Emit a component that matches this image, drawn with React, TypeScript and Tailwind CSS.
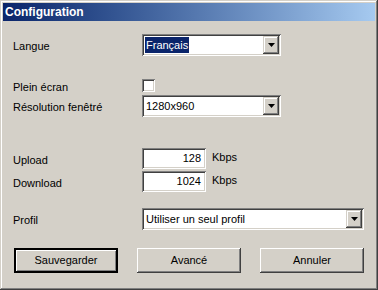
const sunken =
  'shadow-[inset_1px_1px_#808080,inset_-1px_-1px_#ffffff,inset_2px_2px_#404040,inset_-2px_-2px_#d4d0c8]';
const raised =
  'shadow-[inset_-1px_-1px_#404040,inset_1px_1px_#d4d0c8,inset_-2px_-2px_#808080,inset_2px_2px_#ffffff]';

function Arrow() {
  return (
    <div className={`flex h-full w-[16px] items-center justify-center bg-[#d4d0c8] ${raised}`}>
      <svg width="7" height="4" viewBox="0 0 7 4">
        <polygon points="0,0 7,0 3.5,4" fill="#000" />
      </svg>
    </div>
  );
}

function Combo({ value, width, focused }: { value: string; width: string; focused?: boolean }) {
  return (
    <div className={`flex h-[22px] ${width} items-stretch bg-white p-[2px] ${sunken}`}>
      <div className="flex flex-1 items-center pl-[1px]">
        <span className={focused ? 'bg-[#0a246a] px-[1px] leading-[16px] text-white' : 'pl-[1px]'}>{value}</span>
      </div>
      <Arrow />
    </div>
  );
}

function Row({ label, className, children }: { label: string; className: string; children: React.ReactNode }) {
  return (
    <div className={`flex items-center ${className}`}>
      <div className="ml-[10px] w-[129px] pt-[3px]">{label}</div>
      {children}
    </div>
  );
}

function NumField({ value }: { value: string }) {
  return (
    <div className="flex items-center gap-[6px]">
      <div className={`flex h-[21px] w-[64px] items-center justify-end bg-white pr-[5px] ${sunken}`}>{value}</div>
      <span className="-mt-[3px]">Kbps</span>
    </div>
  );
}

function Button({ label, isDefault }: { label: string; isDefault?: boolean }) {
  return (
    <button
      type="button"
      className={`flex h-[25px] w-[104px] items-center justify-center bg-[#d4d0c8] ${
        isDefault
          ? 'border border-black shadow-[inset_1px_1px_#000000,inset_-1px_-1px_#000000,inset_2px_2px_#ffffff,inset_-2px_-2px_#808080]'
          : 'shadow-[inset_-1px_-1px_#404040,inset_1px_1px_#ffffff,inset_-2px_-2px_#808080,inset_2px_2px_#d4d0c8]'
      }`}
    >
      {label}
    </button>
  );
}

export default function App() {
  return (
    <div className="h-[290px] w-[378px] bg-[#d4d0c8] p-[3px] font-['Liberation_Sans',Arial,sans-serif] text-[11px] text-black shadow-[inset_-1px_-1px_#404040,inset_1px_1px_#d4d0c8,inset_-2px_-2px_#808080,inset_2px_2px_#ffffff]">
      <div className="flex h-[18px] items-center bg-gradient-to-r from-[#0a246a] to-[#a6caf0] pl-[2px] text-[12px] font-bold text-white">
        Configuration
      </div>

      <Row label="Langue" className="mt-[13px] h-[22px]">
        <Combo value="Français" width="w-[139px]" focused />
      </Row>

      <Row label="Plein écran" className="mt-[23px] h-[13px]">
        <div className={`h-[13px] w-[13px] bg-white ${sunken}`} />
      </Row>

      <Row label="Résolution fenêtré" className="mt-[3px] h-[22px]">
        <Combo value="1280x960" width="w-[139px]" />
      </Row>

      <Row label="Upload" className="mt-[31px] h-[21px]">
        <NumField value="128" />
      </Row>

      <Row label="Download" className="mt-[2px] h-[21px]">
        <NumField value="1024" />
      </Row>

      <Row label="Profil" className="mt-[16px] h-[22px]">
        <Combo value="Utiliser un seul profil" width="w-[222px]" />
      </Row>

      <div className="mt-[18px] ml-[11px] flex gap-[19px]">
        <Button label="Sauvegarder" isDefault />
        <Button label="Avancé" />
        <Button label="Annuler" />
      </div>
    </div>
  );
}
